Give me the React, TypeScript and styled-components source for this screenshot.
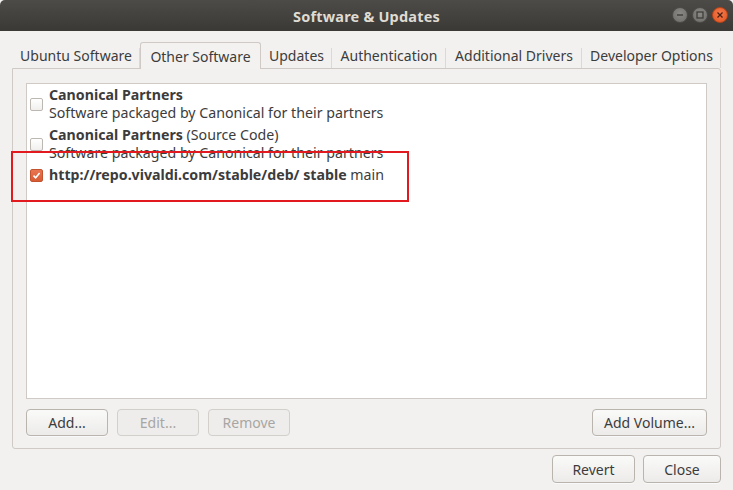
import React from "react";
import styled, { createGlobalStyle } from "styled-components";

const Global = createGlobalStyle`
  html, body { margin: 0; padding: 0; background: #f2f1f0; }
  body { font-family: "Noto Sans", "DejaVu Sans", sans-serif; font-size: 14px; color: #3c3c3c; }
  * { box-sizing: border-box; }
`;

const Win = styled.div`
  position: relative;
  width: 733px;
  height: 490px;
  display: flex;
  flex-direction: column;
  background: #f2f1f0;
  overflow: hidden;
`;

const TitleBar = styled.div`
  height: 31px;
  flex: none;
  display: flex;
  align-items: center;
  justify-content: center;
  position: relative;
  background: linear-gradient(#4c4b47, #3a3935);
  border-radius: 5px 5px 0 0;
  color: #dfdbd2;
  font-weight: bold;
  font-size: 14.5px;
  letter-spacing: 0.2px;
`;

const WinButtons = styled.div`
  position: absolute;
  right: 5px;
  top: 7px;
  display: flex;
  gap: 4px;
`;

const WinBtn = styled.div<{ $close?: boolean }>`
  width: 16px;
  height: 16px;
  border-radius: 50%;
  display: flex;
  align-items: center;
  justify-content: center;
  background: ${(p) =>
    p.$close
      ? "radial-gradient(circle at 50% 40%, #f47a4e, #e1531f)"
      : "radial-gradient(circle at 50% 40%, #8a8985, #6c6b67)"};
  border: 1px solid ${(p) => (p.$close ? "#b84418" : "#4d4c48")};
`;

const Content = styled.div`
  flex: 1;
  display: flex;
  flex-direction: column;
  padding: 11px 12px 7px 12px;
`;

const Tabs = styled.div`
  display: flex;
  height: 26px;
  align-items: flex-end;
`;

const Tab = styled.div<{ $w: number; $active?: boolean }>`
  width: ${(p) => p.$w}px;
  height: ${(p) => (p.$active ? 27 : 26)}px;
  display: flex;
  align-items: center;
  justify-content: center;
  color: #3c3c3c;
  font-size: 14px;
  position: relative;
  ${(p) =>
    p.$active
      ? `
    background: #f3f2f1;
    border: 1px solid #cfcac5;
    border-bottom: none;
    border-radius: 3px 3px 0 0;
    margin-bottom: -1px;
    z-index: 1;
  `
      : `
    &:after {
      content: "";
      position: absolute;
      right: 0;
      top: 6px;
      bottom: 0;
      width: 1px;
      background: #dcd8d4;
    }
  `}
`;

const Panel = styled.div`
  flex: 1;
  height: 380px;
  border: 1px solid #cfcac5;
  border-radius: 0 3px 3px 3px;
  display: flex;
  flex-direction: column;
  padding: 14px 13px 12px 13px;
  gap: 10px;
`;

const List = styled.div`
  flex: 1;
  background: #ffffff;
  border: 1px solid #cfcac5;
  padding: 0 3px;
  display: flex;
  flex-direction: column;
`;

const Item = styled.div`
  display: flex;
  align-items: center;
  gap: 6px;
  padding: 2px 0;
`;

const Box = styled.div<{ $checked?: boolean }>`
  width: 13px;
  height: 13px;
  flex: none;
  border-radius: 2px;
  display: flex;
  align-items: center;
  justify-content: center;
  background: ${(p) => (p.$checked ? "linear-gradient(#e97552, #d95b34)" : "linear-gradient(#ffffff, #f0efee)")};
  border: 1px solid ${(p) => (p.$checked ? "#c3532f" : "#bcb7b1")};
`;

const ItemText = styled.div`
  display: flex;
  flex-direction: column;
  line-height: 18px;
  font-size: 14.2px;
  color: #3c3c3c;
`;

const Bold = styled.span`
  font-weight: bold;
`;

const ButtonRow = styled.div`
  display: flex;
  gap: 9px;
  height: 27px;
`;

const Spacer = styled.div`
  flex: 1;
`;

const Btn = styled.button<{ $w: number }>`
  width: ${(p) => p.$w}px;
  height: 27px;
  font-family: inherit;
  font-size: 14px;
  color: ${(p) => (p.disabled ? "#a8a6a3" : "#3c3c3c")};
  border: 1px solid ${(p) => (p.disabled ? "#d3cfcb" : "#b9b4ae")};
  border-radius: 4px;
  background: ${(p) => (p.disabled ? "#eeedec" : "linear-gradient(#fafaf9, #ecebe9)")};
  padding: 0;
  box-shadow: ${(p) => (p.disabled ? "none" : "0 1px 0 rgba(255,255,255,0.6)")};
`;

const Footer = styled.div`
  display: flex;
  justify-content: flex-end;
  gap: 8px;
  padding-top: 6px;
`;

const FooterBtn = styled(Btn)`
  height: 28px;
`;

const Highlight = styled.div`
  position: absolute;
  left: 11px;
  top: 151px;
  width: 398px;
  height: 51px;
  border: 2px solid #e2191e;
  pointer-events: none;
`;

export default function App() {
  return (
    <>
      <Global />
      <Win>
        <TitleBar>
          Software &amp; Updates
          <WinButtons>
            <WinBtn>
              <svg width="8" height="8" viewBox="0 0 8 8">
                <line x1="1" y1="4" x2="7" y2="4" stroke="#3a3935" strokeWidth="1.3" />
              </svg>
            </WinBtn>
            <WinBtn>
              <svg width="8" height="8" viewBox="0 0 8 8">
                <rect x="1" y="1" width="6" height="6" fill="none" stroke="#3a3935" strokeWidth="1.2" />
              </svg>
            </WinBtn>
            <WinBtn $close>
              <svg width="8" height="8" viewBox="0 0 8 8">
                <path d="M1.5 1.5 L6.5 6.5 M6.5 1.5 L1.5 6.5" stroke="#4a2010" strokeWidth="1.3" />
              </svg>
            </WinBtn>
          </WinButtons>
        </TitleBar>
        <Content>
          <Tabs>
            <Tab $w={128}>Ubuntu Software</Tab>
            <Tab $w={121} $active>
              Other Software
            </Tab>
            <Tab $w={71}>Updates</Tab>
            <Tab $w={114}>Authentication</Tab>
            <Tab $w={136}>Additional Drivers</Tab>
            <Tab $w={139}>Developer Options</Tab>
          </Tabs>
          <Panel>
            <List>
              <Item>
                <Box />
                <ItemText>
                  <Bold>Canonical Partners</Bold>
                  <span>Software packaged by Canonical for their partners</span>
                </ItemText>
              </Item>
              <Item>
                <Box />
                <ItemText>
                  <span>
                    <Bold>Canonical Partners</Bold> (Source Code)
                  </span>
                  <span>Software packaged by Canonical for their partners</span>
                </ItemText>
              </Item>
              <Item>
                <Box $checked>
                  <svg width="9" height="9" viewBox="0 0 9 9">
                    <path d="M1.5 4.6 L3.6 6.7 L7.6 2" fill="none" stroke="#ffffff" strokeWidth="1.6" />
                  </svg>
                </Box>
                <ItemText>
                  <span>
                    <Bold>http://repo.vivaldi.com/stable/deb/ stable</Bold> main
                  </span>
                </ItemText>
              </Item>
            </List>
            <ButtonRow>
              <Btn $w={82}>Add...</Btn>
              <Btn $w={82} disabled>
                Edit...
              </Btn>
              <Btn $w={82} disabled>
                Remove
              </Btn>
              <Spacer />
              <Btn $w={115}>Add Volume...</Btn>
            </ButtonRow>
          </Panel>
          <Footer>
            <FooterBtn $w={83}>Revert</FooterBtn>
            <FooterBtn $w={78}>Close</FooterBtn>
          </Footer>
        </Content>
        <Highlight />
      </Win>
    </>
  );
}
